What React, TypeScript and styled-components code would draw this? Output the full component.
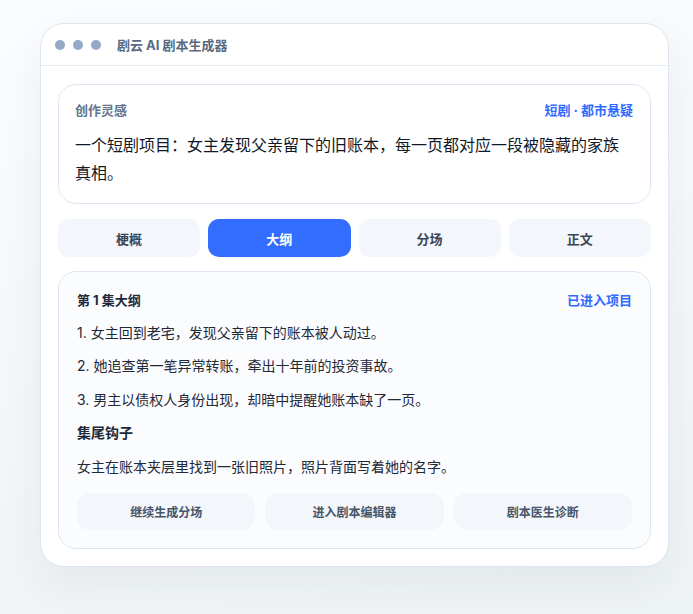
import styled, { createGlobalStyle } from "styled-components";

const GlobalStyle = createGlobalStyle`
  * { box-sizing: border-box; }
  html, body { margin: 0; padding: 0; }
  body {
    min-height: 614px;
    font-family: Inter, "Noto Sans CJK SC", "Noto Sans", sans-serif;
    background: linear-gradient(170deg, #fbfcfd 0%, #f4f6f8 55%, #eef3f3 100%);
  }
`;

const Page = styled.div`
  padding: 23px 24px 0 40px;
  height: 614px;
`;

const Window = styled.div`
  background: #fff;
  border: 1px solid #dfe6ef;
  border-radius: 24px;
  box-shadow: 0 18px 40px rgba(30, 50, 80, 0.06);
  overflow: hidden;
`;

const TitleBar = styled.div`
  height: 42px;
  display: flex;
  align-items: center;
  padding-left: 14px;
  border-bottom: 1px solid #e5ebf2;
`;

const Dots = styled.div`
  display: flex;
  gap: 8px;
  margin-right: 16px;
`;

const Dot = styled.span`
  width: 10px;
  height: 10px;
  border-radius: 50%;
  background: #93a9c6;
`;

const AppName = styled.div`
  font-size: 13px;
  font-weight: 700;
  color: #5b6a80;
  margin-top: -1px;
`;

const Body = styled.div`
  padding: 18px 17px 17px;
  display: flex;
  flex-direction: column;
  gap: 14px;
`;

const Panel = styled.div<{ tinted?: boolean }>`
  border: 1px solid #dce5f1;
  border-radius: 18px;
  background: ${(p) => (p.tinted ? "#fbfcfe" : "#fff")};
`;

const PromptPanel = styled(Panel)`
  padding: 15px 17px 16px 16px;
`;

const PanelHead = styled.div`
  display: flex;
  justify-content: space-between;
  align-items: center;
  font-size: 13px;
  font-weight: 700;
  line-height: 20px;
`;

const Muted = styled.span`
  color: #64748b;
`;

const Accent = styled.span`
  color: #2f6bff;
`;

const Prompt = styled.div`
  margin-top: 11px;
  font-size: 16px;
  line-height: 28px;
  color: #111827;
`;

const Tabs = styled.div`
  display: grid;
  grid-template-columns: repeat(4, 1fr);
  gap: 8px;
  margin-top: 1px;
`;

const Tab = styled.div<{ active?: boolean }>`
  height: 38px;
  border-radius: 11px;
  display: flex;
  align-items: center;
  justify-content: center;
  font-size: 13px;
  font-weight: 700;
  background: ${(p) => (p.active ? "#336dff" : "#f3f6fb")};
  color: ${(p) => (p.active ? "#fff" : "#3a4558")};
`;

const OutlinePanel = styled(Panel)`
  padding: 18px 18px 18px 18px;
`;

const OutlineHead = styled(PanelHead)`
  color: #1e293b;
`;

const Item = styled.div<{ strong?: boolean }>`
  margin-top: 11.5px;
  font-size: 14px;
  line-height: 22px;
  color: #1f2937;
  font-weight: ${(p) => (p.strong ? 700 : 400)};
`;

const Actions = styled.div`
  display: grid;
  grid-template-columns: repeat(3, 1fr);
  gap: 10px;
  margin-top: 15.5px;
`;

const ActionButton = styled.div`
  height: 37px;
  border-radius: 13px;
  background: #f3f6fb;
  display: flex;
  align-items: center;
  justify-content: center;
  font-size: 12px;
  font-weight: 700;
  color: #475569;
`;

const tabs = ["梗概", "大纲", "分场", "正文"];
const items = [
  "1. 女主回到老宅，发现父亲留下的账本被人动过。",
  "2. 她追查第一笔异常转账，牵出十年前的投资事故。",
  "3. 男主以债权人身份出现，却暗中提醒她账本缺了一页。",
];
const actions = ["继续生成分场", "进入剧本编辑器", "剧本医生诊断"];

export default function App() {
  return (
    <>
      <GlobalStyle />
      <Page>
        <Window>
          <TitleBar>
            <Dots>
              <Dot />
              <Dot />
              <Dot />
            </Dots>
            <AppName>剧云 AI 剧本生成器</AppName>
          </TitleBar>
          <Body>
            <PromptPanel>
              <PanelHead>
                <Muted>创作灵感</Muted>
                <Accent>短剧 · 都市悬疑</Accent>
              </PanelHead>
              <Prompt>
                一个短剧项目：女主发现父亲留下的旧账本，每一页都对应一段被隐藏的家族真相。
              </Prompt>
            </PromptPanel>
            <Tabs>
              {tabs.map((t) => (
                <Tab key={t} active={t === "大纲"}>
                  {t}
                </Tab>
              ))}
            </Tabs>
            <OutlinePanel tinted>
              <OutlineHead>
                <span>第 1 集大纲</span>
                <Accent>已进入项目</Accent>
              </OutlineHead>
              {items.map((it) => (
                <Item key={it}>{it}</Item>
              ))}
              <Item strong>集尾钩子</Item>
              <Item>女主在账本夹层里找到一张旧照片，照片背面写着她的名字。</Item>
              <Actions>
                {actions.map((a) => (
                  <ActionButton key={a}>{a}</ActionButton>
                ))}
              </Actions>
            </OutlinePanel>
          </Body>
        </Window>
      </Page>
    </>
  );
}
